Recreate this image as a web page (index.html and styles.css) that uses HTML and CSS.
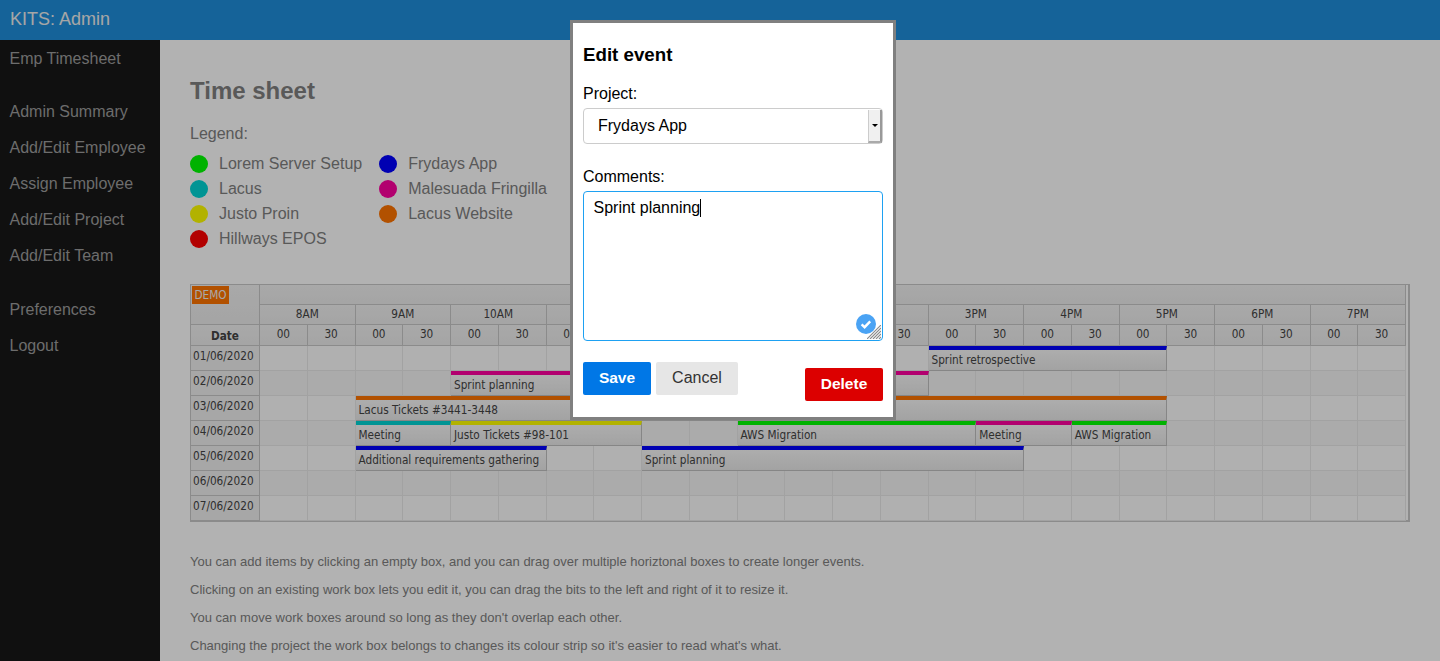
FILE: index.html
```html
<!DOCTYPE html>
<html lang="en">

<head>
    <meta charset="UTF-8">
    <meta name="viewport" content="width=device-width, initial-scale=1.0">
    <title>KITS: Admin</title>
    <link rel="stylesheet" href="styles.css">
</head>

<body>

    <header class="topbar">KITS: Admin</header>

    <div class="page">
        <nav class="sidebar">
            <div class="nav-group">
                <a href="#">Emp Timesheet</a>
            </div>
            <div class="nav-group">
                <a href="#">Admin Summary</a>
                <a href="#">Add/Edit Employee</a>
                <a href="#">Assign Employee</a>
                <a href="#">Add/Edit Project</a>
                <a href="#">Add/Edit Team</a>
            </div>
            <div class="nav-group">
                <a href="#">Preferences</a>
                <a href="#">Logout</a>
            </div>
        </nav>

        <main class="content">
            <h1>Time sheet</h1>
            <p class="legend-title">Legend:</p>
            <ul class="legend">
                <li><span class="dot green"></span>Lorem Server Setup</li>
                <li><span class="dot teal"></span>Lacus</li>
                <li><span class="dot yellow"></span>Justo Proin</li>
                <li><span class="dot red"></span>Hillways EPOS</li>
                <li><span class="dot blue"></span>Frydays App</li>
                <li><span class="dot pink"></span>Malesuada Fringilla</li>
                <li><span class="dot orange"></span>Lacus Website</li>
            </ul>

            <!-- rows are filled in by script.js -->
            <div class="scheduler" id="scheduler"></div>

            <div class="notes">
                <p>You can add items by clicking an empty box, and you can drag over multiple horiztonal boxes to create longer events.</p>
                <p>Clicking on an existing work box lets you edit it, you can drag the bits to the left and right of it to resize it.</p>
                <p>You can move work boxes around so long as they don't overlap each other.</p>
                <p>Changing the project the work box belongs to changes its colour strip so it's easier to read what's what.</p>
            </div>
        </main>
    </div>

    <div class="overlay"></div>

    <div class="modal">
        <h2>Edit event</h2>

        <label for="project">Project:</label>
        <div class="select-wrap">
            <select id="project">
                <option>Frydays App</option>
                <option>Lorem Server Setup</option>
                <option>Lacus</option>
            </select>
            <span class="select-arrow"></span>
        </div>

        <label>Comments:</label>
        <div class="comments">
            <span>Sprint planning</span><span class="caret"></span>
            <svg class="check" width="20" height="20" viewBox="0 0 20 20">
                <circle cx="10" cy="10" r="10" fill="#4aa3f4"/>
                <path d="M5.6 10.4l3 2.8 5.6-5.8" fill="none" stroke="#fff" stroke-width="2.4"/>
            </svg>
            <svg class="grip" width="14" height="14" viewBox="0 0 14 14">
                <path d="M0 14L14 0M3 14L14 3M6 14l8-8M9 14l5-5M12 14l2-2" stroke="#8a8a8a" stroke-width="1.1"/>
            </svg>
        </div>

        <div class="buttons">
            <button type="button" class="btn-save">Save</button>
            <button type="button" class="btn-cancel">Cancel</button>
            <button type="button" class="btn-delete">Delete</button>
        </div>
    </div>

    <script src="script.js"></script>

</body>

</html>
```

FILE: styles.css
```css
html,
body {
    height: 100%;
}

body {
    font-family: 'Liberation Sans', Arial, sans-serif;
    font-size: 16px;
    background-color: #fff;
    color: #808080;
    margin: 0;
    overflow: hidden;
}

.topbar {
    background-color: #1f8fdb;
    color: #eee;
    height: 40px;
    line-height: 39px;
    padding-left: 10px;
    font-size: 18px;
}

.page {
    display: flex;
    height: calc(100% - 40px);
}

.sidebar {
    background-color: #181818;
    width: 160px;
    flex-shrink: 0;
    padding: 1px 0 0 9.5px;
    box-sizing: border-box;
}

.nav-group {
    display: flex;
    flex-direction: column;
    margin-bottom: 17px;
}

.sidebar a {
    color: #9c9c9c;
    text-decoration: none;
    height: 36.1px;
    line-height: 36px;
}

.content {
    flex: 1;
    padding: 0 30px;
    min-width: 0;
}

h1 {
    font-size: 24px;
    line-height: 28px;
    margin: 37px 0 0;
    color: #808080;
}

.legend-title {
    margin: 17px 0 0;
    line-height: 24px;
}

.legend {
    list-style: none;
    margin: 5px 0 0;
    padding: 0;
    display: grid;
    grid-auto-flow: column;
    grid-template-rows: repeat(4, 25px);
    grid-auto-columns: max-content;
    column-gap: 17px;
}

.legend li {
    display: flex;
    align-items: center;
}

.dot {
    width: 18px;
    height: 18px;
    border-radius: 50%;
    margin-right: 11px;
}

.green { background-color: #00ff00; }
.teal { background-color: #00d4d4; }
.yellow { background-color: #ffff00; }
.red { background-color: #ff0000; }
.blue { background-color: #0000ff; }
.pink { background-color: #ff00a0; }
.orange { background-color: #ff7400; }

/* timeline */
.scheduler {
    margin-top: 33px;
    width: 1220px;
    height: 238px;
    box-sizing: border-box;
    border: 1px solid #c8c8c8;
    border-width: 1px 2px 2px 1px;
    padding-right: 2px;
    display: grid;
    grid-template-columns: 69px repeat(24, 1fr);
    grid-template-rows: 20px 20px 21px repeat(7, 25px);
    font-family: 'DejaVu Sans', sans-serif;
    font-stretch: condensed;
    font-size: 11.7px;
    color: #444;
}

.head {
    background: linear-gradient(#f2f2f2, #ececec);
    border-right: 1px solid #c8c8c8;
    border-bottom: 1px solid #c8c8c8;
    box-sizing: border-box;
    text-align: center;
    line-height: 18px;
    min-width: 0;
}

.head.corner {
    text-align: left;
    padding: 1px 0 0 1px;
}

.demo {
    display: inline-block;
    background-color: #ff7400;
    color: #f2f2f2;
    width: 37px;
    height: 18px;
    text-align: center;
    line-height: 18px;
}

.head.date-title {
    font-weight: bold;
    line-height: 22px;
}

.date {
    background-color: #f0f0f0;
    border-right: 1px solid #c8c8c8;
    border-bottom: 1px solid #c8c8c8;
    box-sizing: border-box;
    padding-left: 2px;
    line-height: 20px;
}

.cell {
    background-color: #fdfdfd;
    border-right: 1px solid #e8e8e8;
    border-bottom: 1px solid #e8e8e8;
    box-sizing: border-box;
    min-width: 0;
}

.cell.alt {
    background-color: #f5f5f5;
}

.event {
    background: linear-gradient(#f8f8f8, #e9e9e9);
    border-top: 4px solid #999;
    border-right: 1px solid #c0c0c0;
    border-bottom: 1px solid #c0c0c0;
    box-sizing: border-box;
    padding-left: 3px;
    line-height: 20px;
    white-space: nowrap;
    overflow: hidden;
}

.event.green { border-top-color: #00ff00; }
.event.teal { border-top-color: #00d4d4; }
.event.yellow { border-top-color: #ffff00; }
.event.blue { border-top-color: #0000ff; }
.event.pink { border-top-color: #ff00a0; }
.event.orange { border-top-color: #ff7400; }

.notes {
    margin-top: 26px;
    font-size: 13px;
}

.notes p {
    margin: 0;
    height: 28px;
    line-height: 28px;
}

.overlay {
    position: fixed;
    top: 0;
    left: 0;
    right: 0;
    bottom: 0;
    background-color: rgba(0, 0, 0, 0.3);
}

/* edit dialog */
.modal {
    position: fixed;
    top: 20px;
    left: 570px;
    width: 326px;
    height: 400px;
    box-sizing: border-box;
    background-color: #fff;
    border: 3px solid #808080;
    padding: 0 10px;
    color: #000;
}

.modal h2 {
    font-size: 18.72px;
    line-height: 22px;
    margin: 21px 0 0;
}

.modal label {
    display: block;
    margin-top: 19px;
    line-height: 18px;
}

.select-wrap {
    position: relative;
    margin-top: 5px;
    height: 36px;
    margin-bottom: 24px;
}

.select-wrap select {
    appearance: none;
    width: 100%;
    height: 36px;
    box-sizing: border-box;
    border: 1px solid #ccc;
    border-radius: 4px;
    background-color: #fff;
    padding: 0 0 2px 14px;
    font-family: inherit;
    font-size: 16px;
    color: #000;
}

.select-arrow {
    position: absolute;
    top: 2px;
    right: 1px;
    width: 14px;
    height: 33px;
    background-color: #f0f0f0;
    border-right: 2px solid #999;
    border-bottom: 2px solid #aaa;
    border-left: 1px solid #ccc;
    box-sizing: border-box;
}

.select-arrow::after {
    content: "";
    position: absolute;
    top: 14px;
    left: 3px;
    border: 3px solid transparent;
    border-top: 3px solid #000;
    border-bottom: 0;
}

.comments {
    position: relative;
    margin-top: 5px;
    height: 150px;
    box-sizing: border-box;
    border: 1px solid #1ea1f2;
    border-radius: 4px;
    padding: 7px 9.5px;
    line-height: 18px;
}

.caret {
    display: inline-block;
    width: 1px;
    height: 18px;
    background-color: #000;
    vertical-align: top;
}

.check {
    position: absolute;
    right: 6px;
    bottom: 6px;
}

.grip {
    position: absolute;
    right: 1px;
    bottom: 1px;
}

.buttons {
    display: flex;
    align-items: flex-start;
    margin-top: 21px;
}

button {
    font-family: inherit;
    font-size: 16px;
    height: 33px;
    border: none;
    border-radius: 2px;
    cursor: pointer;
    padding: 0 0 1px;
}

.btn-save {
    background-color: #0077e6;
    color: #fff;
    font-weight: bold;
    font-size: 15.5px;
    width: 68px;
}

.btn-cancel {
    background-color: #e6e6e6;
    color: #333;
    width: 82px;
    margin-left: 5px;
}

.btn-delete {
    background-color: #dc0000;
    color: #fff;
    font-weight: bold;
    font-size: 15.5px;
    width: 78px;
    margin-left: auto;
    margin-top: 6px;
}
```

FILE: script.js
```js
var hours = ["8AM", "9AM", "10AM", "11AM", "12PM", "1PM", "2PM", "3PM", "4PM", "5PM", "6PM", "7PM"];
var dates = ["01/06/2020", "02/06/2020", "03/06/2020", "04/06/2020", "05/06/2020", "06/06/2020", "07/06/2020"];

// start and end are half hour slots counted from 8AM
var events = [
    { row: 0, start: 14, end: 19, colour: "blue", text: "Sprint retrospective" },
    { row: 1, start: 4, end: 14, colour: "pink", text: "Sprint planning" },
    { row: 2, start: 2, end: 19, colour: "orange", text: "Lacus Tickets #3441-3448" },
    { row: 3, start: 2, end: 4, colour: "teal", text: "Meeting" },
    { row: 3, start: 4, end: 8, colour: "yellow", text: "Justo Tickets #98-101" },
    { row: 3, start: 10, end: 15, colour: "green", text: "AWS Migration" },
    { row: 3, start: 15, end: 17, colour: "pink", text: "Meeting" },
    { row: 3, start: 17, end: 19, colour: "green", text: "AWS Migration" },
    { row: 4, start: 2, end: 6, colour: "blue", text: "Additional requirements gathering" },
    { row: 4, start: 8, end: 16, colour: "blue", text: "Sprint planning" }
];

var scheduler = document.getElementById("scheduler");

function addBox(className, text, column, row) {
    var box = document.createElement("div");
    box.className = className;
    box.textContent = text;
    box.style.gridColumn = column;
    box.style.gridRow = row;
    scheduler.appendChild(box);
    return box;
}

var corner = addBox("head corner", "", "1", "1 / span 2");
corner.innerHTML = '<span class="demo">DEMO</span>';
addBox("head", "", "2 / span 24", "1");
addBox("head date-title", "Date", "1", "3");

hours.forEach(function (hour, i) {
    addBox("head", hour, (i * 2 + 2) + " / span 2", "2");
    addBox("head", "00", String(i * 2 + 2), "3");
    addBox("head", "30", String(i * 2 + 3), "3");
});

dates.forEach(function (date, r) {
    addBox("date", date, "1", String(r + 4));
    for (var c = 0; c < 24; c++) {
        addBox(r % 2 ? "cell alt" : "cell", "", String(c + 2), String(r + 4));
    }
});

events.forEach(function (event) {
    addBox("event " + event.colour, event.text, (event.start + 2) + " / " + (event.end + 2), String(event.row + 4));
});
```
